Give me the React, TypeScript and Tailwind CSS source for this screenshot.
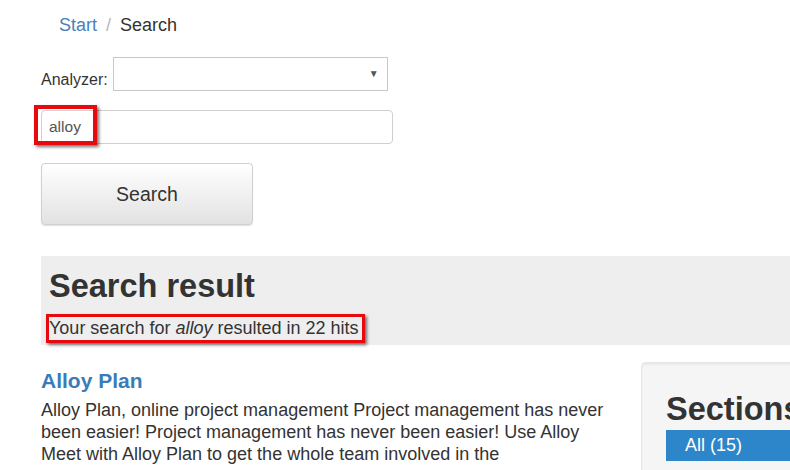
import React from "react";

// Resultado de búsqueda: formulario arriba, listado de hits y panel de secciones
const hits = [
  {
    title: "Alloy Plan",
    text: "Alloy Plan, online project management Project management has never been easier! Project management has never been easier! Use Alloy Meet with Alloy Plan to get the whole team involved in the",
  },
];

const App: React.FC = () => {
  return (
    <div className="w-[790px] h-[470px] overflow-hidden bg-white text-[#333] font-['Liberation_Sans',Arial,sans-serif]">
      <div className="w-[1000px] pl-[41px]">
        {/* Breadcrumb */}
        <div className="pl-[18px] pt-[13px] text-[18px] leading-[24px]">
          <span className="text-[#4a7fba]">Start</span>
          <span className="px-[9px] text-[#b8b8b8]">/</span>
          <span>Search</span>
        </div>

        {/* Analyzer */}
        <div className="mt-[20px] flex items-end gap-[5px]">
          <label className="text-[16px] leading-[20px] pb-[1px]">Analyzer:</label>
          <div className="relative w-[275px] h-[34px] border border-[#c8c8c8] bg-white">
            <span className="absolute right-[8px] top-[8px] text-[10px] text-[#555]">▼</span>
          </div>
        </div>

        {/* Campo de búsqueda */}
        <div className="relative mt-[19px] w-[352px]">
          <input
            type="text"
            defaultValue="alloy"
            className="w-full h-[34px] rounded-[4px] border border-[#cfcfcf] px-[7px] text-[15.5px] text-[#555] outline-none"
          />
          <div className="absolute -left-[7px] -top-[5px] w-[63px] h-[40px] border-[4px] border-[#e8090f] shadow-[2px_2px_3px_rgba(0,0,0,0.55)]" />
        </div>

        <button
          type="button"
          className="mt-[19px] w-[212px] h-[62px] rounded-[4px] border border-[#d0d0d0] bg-gradient-to-b from-white to-[#e2e2e2] pt-[2px] text-[19.5px] text-[#333] shadow-[0_1px_1px_rgba(0,0,0,0.12)]"
        >
          Search
        </button>

        {/* Jumbotron resultado */}
        <div className="mt-[31px] h-[89px] bg-[#eeeeee] pl-[8px] pt-[12px]">
          <h1 className="text-[32.5px] leading-[36px] font-bold text-[#333]">Search result</h1>
          <p className="mt-[10px] -ml-[3px] inline-block border-[3px] border-[#e8090f] pr-[3px] text-[18px] leading-[23px] shadow-[2px_2px_3px_rgba(0,0,0,0.55)]">
            Your search for <em>alloy</em> resulted in 22 hits
          </p>
        </div>

        <div className="flex">
          {/* Hits */}
          <div className="w-[570px] pt-[24px]">
            {hits.map((h) => (
              <div key={h.title}>
                <h3 className="text-[21px] leading-[24px] font-bold text-[#3a7cb8]">{h.title}</h3>
                <p className="mt-[6px] text-[18px] leading-[22px] text-[#333]">{h.text}</p>
              </div>
            ))}
          </div>

          {/* Secciones */}
          <div className="ml-[30px] mt-[17px] w-[300px] h-[200px] rounded-[4px] border border-[#e6e6e6] bg-[#f5f5f5] shadow-[inset_0_2px_2px_rgba(0,0,0,0.05)] pl-[24px] pt-[28px]">
            <h2 className="text-[32.5px] leading-[36px] font-bold text-[#333]">Sections</h2>
            <div className="mt-[3px] h-[31px] bg-[#2d86c9] pl-[19px] text-[18px] leading-[31px] text-white">All (15)</div>
          </div>
        </div>
      </div>
    </div>
  );
};

export default App;
